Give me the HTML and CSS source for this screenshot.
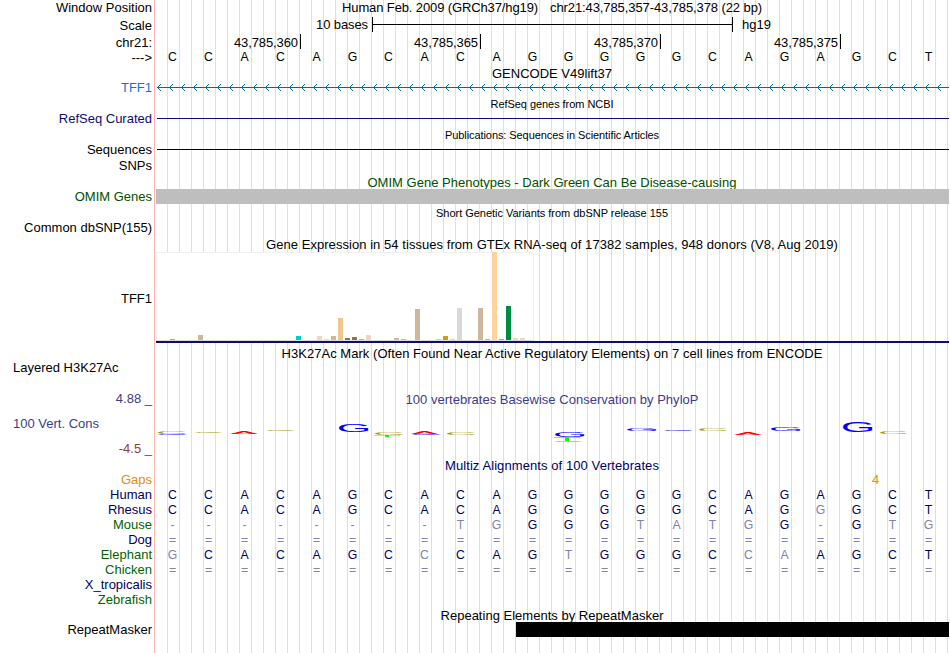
FILE: index.html
```
<!DOCTYPE html>
<html lang="en">
<head>
<meta charset="utf-8">
<title>Genome Browser - chr21:43,785,357-43,785,378</title>
<link rel="stylesheet" href="styles.css">
</head>
<body>
<main class="browser">
  <div class="row position"><div class="label">Window Position</div><div class="plot title"><span data-w="196">Human Feb. 2009 (GRCh37/hg19)</span><span class="range" data-w="212">chr21:43,785,357-43,785,378 (22 bp)</span></div></div>
  <div class="row scale"><div class="label">Scale</div><div class="plot"><span class="scale-size">10 bases</span><span class="scale-bar"></span><span class="scale-db">hg19</span></div></div>
  <div class="row ruler"><div class="label">chr21:</div><div class="plot"><span class="tick first">43,785,360</span><span class="tick">43,785,365</span><span class="tick">43,785,370</span><span class="tick">43,785,375</span></div></div>
  <div class="row strand"><div class="label">---&gt;</div><div class="plot bases black" data-bases="CCACAGCACAGGGGGCAGAGCT"></div></div>
  <div class="row gencode-title"><div class="plot title"><span data-w="120">GENCODE V49lift37</span></div></div>
  <div class="row track gene"><div class="label">TFF1</div><div class="plot"><svg class="arrows" width="793" height="15"></svg></div></div>
  <div class="row small"><div class="plot title"><span data-w="123">RefSeq genes from NCBI</span></div></div>
  <div class="row track refseq"><div class="label">RefSeq Curated</div><div class="plot"><div class="line"></div></div></div>
  <div class="row small"><div class="plot title"><span data-w="214">Publications: Sequences in Scientific Articles</span></div></div>
  <div class="row track"><div class="label">Sequences</div><div class="plot"><div class="line"></div></div></div>
  <div class="row snps"><div class="label">SNPs</div></div>
  <div class="row omim-title"><div class="plot title"><span data-w="369">OMIM Gene Phenotypes - Dark Green Can Be Disease-causing</span></div></div>
  <div class="row track omim"><div class="label">OMIM Genes</div><div class="plot"><div class="block"></div></div></div>
  <div class="row small"><div class="plot title"><span data-w="232">Short Genetic Variants from dbSNP release 155</span></div></div>
  <div class="row track"><div class="label">Common dbSNP(155)</div></div>
  <div class="row gtex-title"><div class="plot title"><span data-w="572">Gene Expression in 54 tissues from GTEx RNA-seq of 17382 samples, 948 donors (V8, Aug 2019)</span></div></div>
  <div class="row gtex"><div class="label">TFF1</div><div class="plot"><svg class="expression" width="378" height="89"></svg></div></div>
  <div class="row mark-title"><div class="plot title"><span data-w="541">H3K27Ac Mark (Often Found Near Active Regulatory Elements) on 7 cell lines from ENCODE</span></div></div>
  <div class="row mark"><div class="label left">Layered H3K27Ac</div></div>
  <div class="row phylop-title"><div class="label">4.88 _</div><div class="plot title"><span data-w="293">100 vertebrates Basewise Conservation by PhyloP</span></div></div>
  <div class="row phylop"><div class="label"><div class="name">100 Vert. Cons</div><div class="low">-4.5 _</div></div><div class="plot"><svg class="logo" width="793" height="54" viewBox="156 404 793 54"></svg></div></div>
  <div class="row multiz-title"><div class="plot title"><span data-w="214">Multiz Alignments of 100 Vertebrates</span></div></div>
  <div class="row track gaps"><div class="label">Gaps</div><div class="plot"><span class="gap">4</span></div></div>
  <div class="row track navy"><div class="label">Human</div><div class="plot bases" data-bases="CCACAGCACAGGGGGCAGAGCT"></div></div>
  <div class="row track navy"><div class="label">Rhesus</div><div class="plot bases" data-bases="CCACAGCACAGGGGGCAGGGCT"></div></div>
  <div class="row track green"><div class="label">Mouse</div><div class="plot bases" data-bases="--------TGGGGTATGG-GTG"></div></div>
  <div class="row track navy"><div class="label">Dog</div><div class="plot bases" data-bases="======================"></div></div>
  <div class="row track green"><div class="label">Elephant</div><div class="plot bases" data-bases="GCACAGCCCAGTGGGCCAAGCT"></div></div>
  <div class="row track green"><div class="label">Chicken</div><div class="plot bases" data-bases="======================"></div></div>
  <div class="row track navy"><div class="label">X_tropicalis</div></div>
  <div class="row track green"><div class="label">Zebrafish</div></div>
  <div class="row repeat-title"><div class="plot title"><span data-w="223">Repeating Elements by RepeatMasker</span></div></div>
  <div class="row track repeat"><div class="label">RepeatMasker</div><div class="plot"><div class="block"></div></div></div>
</main>
<script src="script.js"></script>
</body>
</html>
```
FILE: styles.css
```
* { box-sizing: border-box; }
body { margin: 0; background: #fff; }
.browser {
  width: 949px; height: 653px; overflow: hidden;
  font: 13px/15px "Liberation Sans", Arial, sans-serif; color: #000;
  background:
    linear-gradient(#ffb4b4, #ffb4b4) 154px 0 / 1px 100% no-repeat,
    repeating-linear-gradient(90deg, #dcdcf8 0 1px, transparent 1px 12px) 167px 0 / 782px 100% no-repeat;
}
.row { display: grid; grid-template-columns: 152px 793px; column-gap: 4px; height: 15px; white-space: nowrap; }
.label { grid-column: 1; text-align: right; }
.label.left { text-align: left; padding-left: 13px; }
.plot { grid-column: 2; min-width: 0; }
.title { display: flex; justify-content: center; padding-right: 1px; }
.position { height: 16px; }
.position .range { margin-left: 12px; }
.scale { height: 17px; }
.scale .label { padding-top: 2px; }
.scale .plot { display: flex; padding-top: 1px; }
.scale-size { width: 212px; text-align: right; letter-spacing: -0.1px; }
.scale-bar { width: 361px; height: 15px; margin: 0 9px 0 4px; border: solid #000; border-width: 0 1px; background: linear-gradient(#000, #000) 0 7px / 100% 1px no-repeat; }
.ruler { height: 16px; }
.ruler .label { padding-top: 2px; }
.ruler .plot { display: flex; padding-top: 1px; }
.tick { width: 180px; height: 15px; padding: 1px 2px 0 0; border-right: 1px solid #000; text-align: right; letter-spacing: -0.1px; }
.tick.first { width: 145px; }
.strand { height: 16px; }
.strand .label { padding-top: 1px; }
.bases { display: grid; grid-template-columns: repeat(22, 36px); margin-left: -1px; text-align: center; color: #000064; }
.bases.black { color: #000; }
.bases span { transform: translateX(-0.5px) scaleX(.94); }
.bases .diff { color: #8080b4; }
.gencode-title { padding-top: 1px; }
.gene { color: #0c78be; }
.arrows, .expression, .logo { display: block; }
.small { height: 16px; padding-top: 3px; font-size: 11px; line-height: 13px; }
.line { height: 1px; margin: 7px 0 0 1px; background: currentColor; }
.refseq { color: #0c0c78; }
.snps { height: 16px; padding-top: 1px; }
.omim-title { height: 16px; padding-top: 2px; color: #005000; }
.omim { color: #005000; }
.omim .block { height: 15px; background: #bebebe; }
.gtex-title { height: 17px; padding-top: 2px; }
.gtex { height: 91px; }
.gtex .label { padding-top: 39px; }
.gtex .plot { height: 91px; border-bottom: 2px solid #0c0c78; }
.mark-title { height: 17px; padding-top: 3px; }
.mark { height: 28px; }
.phylop-title { height: 16px; color: #3c3c8c; }
.phylop-title .label { padding-top: 3px; }
.phylop-title .title { padding-top: 4px; }
.phylop { height: 54px; }
.name { padding: 12px 0 0 13px; text-align: left; color: #3c3c8c; }
.low { padding-top: 10px; color: #8c3c3c; }
.logo text { font: 14px "Liberation Sans", Arial, sans-serif; }
.multiz-title { height: 14px; color: #000064; }
.gaps { color: #e68c14; }
.gap { display: block; padding-left: 716px; }
.navy { color: #000064; }
.green { color: #006400; }
.repeat-title { padding-top: 1px; }
.repeat .block { height: 15px; margin-left: 360px; background: #000; }
```
FILE: script.js
```
const NS = 'http://www.w3.org/2000/svg';
function add(svg, tag, attrs, text) {
  const el = document.createElementNS(NS, tag);
  for (const k in attrs) el.setAttribute(k, attrs[k]);
  if (text) el.textContent = text;
  svg.appendChild(el);
}

// Bases that differ from the human row are dimmed.
const human = 'CCACAGCACAGGGGGCAGAGCT';
document.querySelectorAll('[data-bases]').forEach(row => {
  [...row.dataset.bases].forEach((b, i) => {
    const s = document.createElement('span');
    s.textContent = b;
    if (b !== human[i]) s.className = 'diff';
    row.appendChild(s);
  });
});

// Track titles are spaced out to their measured width.
document.querySelectorAll('[data-w]').forEach(s => {
  const w = s.getBoundingClientRect().width;
  s.style.letterSpacing = (s.dataset.w - w) / s.textContent.length + 'px';
});

const arrows = document.querySelector('.arrows');
let d = 'M1 7.5H793';
for (let x = 1; x < 790; x += 12) d += `M${x + 4} 4L${x + 0.5} 7.5L${x + 4} 11`;
add(arrows, 'path', { d, fill: 'none', stroke: '#0c64a0', 'stroke-width': 1, 'shape-rendering': 'crispEdges' });

// Expression bars: x, height, colour.
const gtex = document.querySelector('.expression');
add(gtex, 'rect', { x: 0.5, y: 0.5, width: 377, height: 88, fill: '#fff', stroke: '#f0f0f0' });
add(gtex, 'rect', { x: 0, y: 88, width: 378, height: 1, fill: '#dcdcdc' });
[[14,1,'#8fbc8f'],[42,5,'#cdb79e'],[140,4,'#00cdcd'],[161,4,'#eed5d2'],[168,1,'#eed5d2'],[175,4,'#cdb79e'],
 [182,22,'#eec591'],[189,2,'#8b7355'],[196,3,'#8b7355'],[203,1,'#cdaa7d'],[210,5,'#eed5d2'],[238,2,'#cdb79e'],
 [245,1,'#cdb79e'],[259,31,'#cdb79e'],[280,1,'#ffb6c1'],[287,4,'#cd9b1d'],[294,1,'#b4eeb4'],[301,32,'#d9d9d9'],
 [322,32,'#cdb79e'],[329,1,'#cdb79e'],[336,88,'#ffd39b'],[343,1,'#a6a6a6'],[350,34,'#008b45'],[357,2,'#eed5d2'],
 [364,2,'#eed5d2']].forEach(([x, h, fill]) => add(gtex, 'rect', { x, y: 88 - h, width: 5, height: h, fill }));

// Conservation logo: letters stretched into their score boxes.
const logo = document.querySelector('.logo');
const ink = { G: [.0503, .7246, .0098, .698], C: [.0498, .6826, .0098, .698], A: [.0015, .665, 0, .688], T: [.022, .589, 0, .688] };
const colour = { G: '#0000ff', C: '#a0a000', A: '#ff0000', T: '#00ff00' };
[['G',158,434,187,435],['C',158,432,186,434.5],['C',195,432,222,433],['A',230,432,258,434],['C',267,430,295,431],
 ['G',339,424,369,432],['C',375,432.5,403,435.5],['G',412,434,441,435],['A',411,432,438,434],['C',447,432.5,475,435.5],
 ['G',555,432,585,437],['C',555,441,582,442],['G',627,428,657,431],['G',664,430,693,431],['C',699,429,727,431],
 ['A',734,432.3,762,435],['G',771,427,801,431],['G',843,421,873,432],['C',880,432,907,434]].forEach(([c, x0, y0, x1, y1]) => {
  const [l, r, b, t] = ink[c];
  const sx = (x1 - x0) / ((r - l) * 14), sy = (y1 - y0) / ((t + b) * 14);
  add(logo, 'text', { fill: colour[c], transform: `translate(${x0 - l * 14 * sx} ${y1 - b * 14 * sy}) scale(${sx} ${sy})` }, c);
});
[[374,435,26,.4],[385,435,4,2],[554,437,26,.6],[565,437,4,4]].forEach(([x, y, width, height]) =>
  add(logo, 'rect', { x, y, width, height, fill: '#00ff00' }));
```
